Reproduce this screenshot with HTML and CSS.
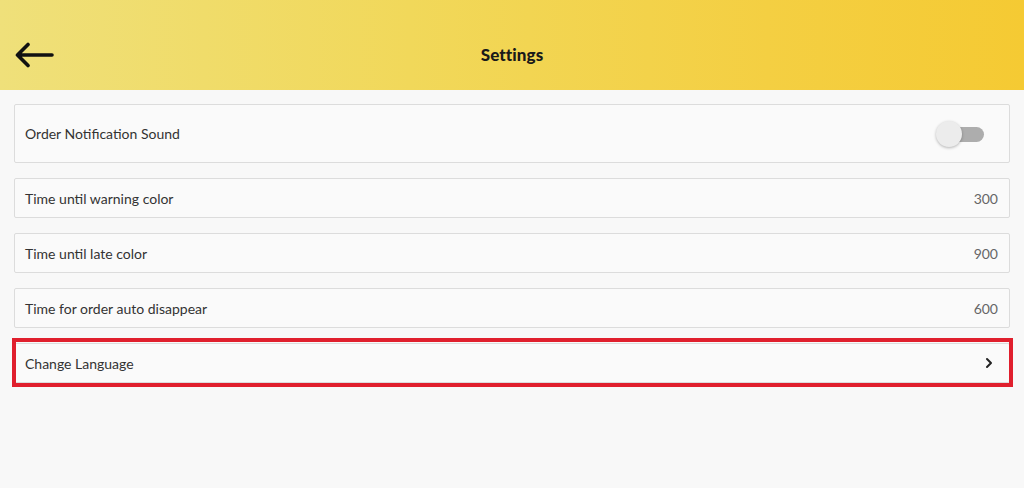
FILE: index.html
```html
<!DOCTYPE html>
<html>
<head>
<meta charset="utf-8">
<link rel="stylesheet" href="styles.css">
</head>
<body>
<header class="topbar">
  <button class="back" aria-label="Back">
    <svg width="40" height="26" viewBox="0 0 40 26"><path d="M38 13H4M14 2.5L3.5 13L14 23.5" fill="none" stroke="#111" stroke-width="3.6" stroke-linecap="round" stroke-linejoin="round"/></svg>
  </button>
  <h1 class="title">Settings</h1>
</header>
<main class="list">
  <div class="row row-tall">
    <span class="label">Order Notification Sound</span>
    <span class="toggle"><span class="track"></span><span class="knob"></span></span>
  </div>
  <div class="row">
    <span class="label">Time until warning color</span>
    <span class="value">300</span>
  </div>
  <div class="row">
    <span class="label">Time until late color</span>
    <span class="value">900</span>
  </div>
  <div class="row">
    <span class="label">Time for order auto disappear</span>
    <span class="value">600</span>
  </div>
  <div class="row row-highlight">
    <span class="label">Change Language</span>
    <svg class="chevron" width="8" height="12" viewBox="0 0 8 12"><path d="M2 2l4 4-4 4" fill="none" stroke="#222" stroke-width="2" stroke-linecap="round" stroke-linejoin="round"/></svg>
  </div>
</main>
</body>
</html>
```
FILE: styles.css
```css
* { box-sizing: border-box; }
html, body { margin: 0; padding: 0; }
body {
  background: #f8f8f8;
  font-family: "Lato", "Open Sans", sans-serif;
  color: #333;
  width: 1024px;
  height: 488px;
  overflow: hidden;
}
.topbar {
  height: 90px;
  background: linear-gradient(90deg, #efe07a 0%, #f1d85a 40%, #f4cf42 75%, #f5ca33 100%);
  display: flex;
  align-items: center;
  justify-content: center;
  position: relative;
}
.back {
  position: absolute;
  left: 14px;
  top: 42px;
  background: none;
  border: 0;
  padding: 0;
  width: 40px;
  height: 26px;
  display: flex;
}
.title {
  margin: 0;
  font-size: 17px;
  font-weight: 900;
  color: #1a1a1a;
  padding-top: 18px;
  letter-spacing: 0.1px;
}
.list {
  padding: 14px 14px 0 14px;
  display: flex;
  flex-direction: column;
  gap: 15px;
}
.row {
  height: 40px;
  background: #fafafa;
  border: 1px solid #dcdcdc;
  border-radius: 2px;
  display: flex;
  align-items: center;
  justify-content: space-between;
  padding: 0 11px 0 10px;
  font-size: 14px;
}
.row-tall { height: 59px; padding-right: 25px; }
.label { color: #333; }
.value { color: #666; }
.row-highlight {
  position: relative;
  padding-right: 16px;
}
.row-highlight::after {
  content: "";
  position: absolute;
  top: -6px;
  bottom: -5px;
  left: -3px;
  right: -4px;
  border: 4px solid #e01f2d;
  pointer-events: none;
}
.toggle {
  position: relative;
  width: 48px;
  height: 28px;
  display: block;
}
.track {
  position: absolute;
  left: 14px;
  top: 7px;
  width: 34px;
  height: 15px;
  border-radius: 8px;
  background: #adadad;
}
.knob {
  position: absolute;
  left: 0;
  top: 1px;
  width: 26px;
  height: 26px;
  border-radius: 50%;
  background: #ececec;
  box-shadow: 0 1px 3px rgba(0,0,0,0.28);
}
```
